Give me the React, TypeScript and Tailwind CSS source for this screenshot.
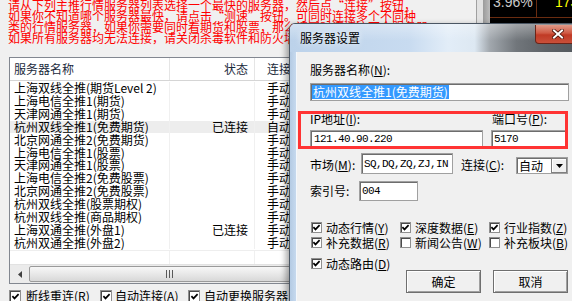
import React from 'react';

const rows = [
  { name: '上海双线全推(期货Level 2)', status: '', mode: '手动' },
  { name: '上海电信全推1(期货)', status: '', mode: '手动' },
  { name: '天津网通全推1(期货)', status: '', mode: '手动' },
  { name: '杭州双线全推1(免费期货)', status: '已连接', mode: '自动', selected: true },
  { name: '北京网通全推2(免费期货)', status: '', mode: '手动' },
  { name: '上海电信全推1(股票)', status: '', mode: '手动' },
  { name: '天津网通全推1(股票)', status: '', mode: '手动' },
  { name: '上海电信全推2(免费股票)', status: '', mode: '手动' },
  { name: '北京网通全推2(免费股票)', status: '', mode: '手动' },
  { name: '杭州双线全推(股票期权)', status: '', mode: '手动' },
  { name: '杭州双线全推(商品期权)', status: '', mode: '手动' },
  { name: '上海双通全推(外盘1)', status: '已连接', mode: '手动' },
  { name: '杭州双通全推(外盘2)', status: '', mode: '手动' },
];

function Box({ checked, big }: { checked?: boolean; big?: boolean }) {
  return (
    <span
      className={`${big ? 'w-[12px] h-[12px]' : 'w-[11px] h-[11px]'} shrink-0 bg-white border border-[#8f8f8f] shadow-[inset_1px_1px_0_#4a4a4a] flex items-center justify-center`}
    >
      {checked && (
        <svg width="9" height="9" viewBox="0 0 9 9">
          <path d="M1.4 4.2 L3.5 6.4 L7.6 2.1" stroke="#000" strokeWidth="1.7" fill="none" />
        </svg>
      )}
    </span>
  );
}

function Key({ k }: { k: string }) {
  return (
    <span>
      (<span className="underline underline-offset-[1px]">{k}</span>)
    </span>
  );
}

const edit = 'bg-white border border-[#a0a0a0] shadow-[inset_1px_1px_0_#6d6d6d] flex items-center';
const mono = "font-['Liberation_Mono',monospace] text-[11px] tracking-[-0.6px]";
const btn =
  'w-[75px] h-[23px] flex items-center justify-center border border-[#6f6f6f] bg-[#f0f0f0] shadow-[inset_1px_1px_0_#ffffff,inset_-1px_-1px_0_#a0a0a0]';

function Dialog() {
  return (
    <div className="absolute left-[289px] top-[23px] w-[300px] h-[290px] flex flex-col rounded-t-[6px] border border-[#4a5663] overflow-hidden shadow-[-3px_2px_6px_rgba(0,0,0,0.35)]">
      {/* title bar */}
      <div className="h-[28px] shrink-0 flex items-start bg-[linear-gradient(to_bottom,rgba(255,255,255,0.35),rgba(255,255,255,0)_60%),linear-gradient(to_right,#bcd2ea_0%,#c8dbf0_40%,#e2edf8_53%,#dde8f2_62%,#a2a8ae_67%,#71767b_76%,#5d6267_86%,#50555a_100%)]">
        <span className="ml-[10px] mt-[8px] text-black [text-shadow:0_0_6px_#ffffff]">服务器设置</span>
        <div className="ml-auto mr-[8px] mt-[1px] w-[45px] h-[19px] rounded-b-[4px] border border-[#6b2418] border-t-0 bg-[linear-gradient(to_bottom,#e09a88,#cf5a44_45%,#c03a25_55%,#c9503a)] flex items-center justify-center">
          <svg width="12" height="10" viewBox="0 0 12 10">
            <path d="M2 1.5 L10 8.5 M10 1.5 L2 8.5" stroke="#4a1208" strokeWidth="3.6" strokeLinecap="square" />
            <path d="M2 1.5 L10 8.5 M10 1.5 L2 8.5" stroke="#ffffff" strokeWidth="2" strokeLinecap="square" />
          </svg>
        </div>
      </div>

      <div className="flex-1 flex">
        <div className="w-[7px] shrink-0 border-r border-[#f4f8fc] bg-[linear-gradient(to_right,#b4cbe4,#c6d9ee)]" />

        {/* client */}
        <div className="relative flex-1 bg-[#f0f0f0] pl-[13px] flex flex-col items-start">
          <div className="mt-[12px] h-[12px]">
            服务器名称<Key k="N" />:
          </div>
          <div className={`mt-[7px] w-[259px] h-[18px] pl-[1px] ${edit}`}>
            <span className="bg-[#3399ff] text-white h-[14px] leading-[14px] px-[1px]">杭州双线全推1(免费期货)</span>
          </div>

          <div className="mt-[12px] h-[12px] flex">
            <span className="w-[182px]">
              IP地址<Key k="I" />:
            </span>
            <span>
              端口号<Key k="P" />:
            </span>
          </div>
          <div className="mt-[5px] flex gap-[8px]">
            <div className={`w-[173px] h-[17px] pl-[3px] ${edit}`}>
              <span className={mono}>121.40.90.220</span>
            </div>
            <div className={`w-[76px] h-[17px] pl-[2px] ${edit}`}>
              <span className={mono}>5170</span>
            </div>
          </div>

          <div className="mt-[6px] h-[21px] flex items-center">
            <span className="w-[51px] pt-[3px]">
              市场<Key k="M" />:
            </span>
            <div className={`w-[92px] h-[21px] pl-[2px] ${edit}`}>
              <span className={mono}>SQ,DQ,ZQ,ZJ,IN</span>
            </div>
            <span className="ml-[8px] w-[55px] pt-[3px]">
              连接<Key k="C" />:
            </span>
            <div className={`mt-[4px] w-[52px] h-[17px] pl-[2px] ${edit}`}>
              <span className="flex-1">自动</span>
              <span className="w-[16px] h-[15px] bg-[#f0f0f0] border border-[#808080] shadow-[inset_1px_1px_0_#ffffff] flex items-center justify-center">
                <svg width="7" height="4" viewBox="0 0 7 4">
                  <path d="M0 0 H7 L3.5 4 Z" fill="#000" />
                </svg>
              </span>
            </div>
          </div>

          <div className="mt-[7px] h-[20px] flex items-center">
            <span className="w-[49px]">索引号:</span>
            <div className={`w-[59px] h-[20px] pl-[2px] ${edit}`}>
              <span className={mono}>004</span>
            </div>
          </div>

          <div className="mt-[21px] ml-[1px] grid grid-cols-[89px_89px_89px] leading-[11px]">
            <div className="h-[11px] flex items-center gap-[4px]">
              <Box checked />
              <span>
                动态行情<Key k="Y" />
              </span>
            </div>
            <div className="h-[11px] flex items-center gap-[4px]">
              <Box checked />
              <span>
                深度数据<Key k="E" />
              </span>
            </div>
            <div className="h-[11px] flex items-center gap-[4px]">
              <Box checked />
              <span>
                行业指数<Key k="Z" />
              </span>
            </div>
          </div>
          <div className="mt-[4px] ml-[1px] grid grid-cols-[89px_89px_89px] leading-[11px]">
            <div className="h-[11px] flex items-center gap-[4px]">
              <Box checked />
              <span>
                补充数据<Key k="R" />
              </span>
            </div>
            <div className="h-[11px] flex items-center gap-[4px]">
              <Box />
              <span>
                新闻公告<Key k="W" />
              </span>
            </div>
            <div className="h-[11px] flex items-center gap-[4px]">
              <Box />
              <span>
                补充板块<Key k="B" />
              </span>
            </div>
          </div>
          <div className="mt-[10px] ml-[1px] h-[11px] flex items-center gap-[4px] leading-[11px]">
            <Box checked />
            <span>
              动态路由<Key k="D" />
            </span>
          </div>

          <div className="mt-[1px] ml-[96px] flex gap-[12px]">
            <div className={btn}>确定</div>
            <div className={btn}>取消</div>
          </div>

          {/* highlight annotation */}
          <div className="absolute left-[1px] top-[59px] w-[270px] h-[38px] border-[3px] border-[#ff3333] pointer-events-none" />
        </div>
      </div>
    </div>
  );
}

export default function App() {
  return (
    <div className="relative w-[572px] h-[301px] overflow-hidden flex bg-[#f0f0f0] text-black text-[12px] leading-[12px] font-['Noto_Sans_CJK_SC','Noto_Sans_CJK_JP',sans-serif]">
      {/* server list window */}
      <div className="w-[476px] shrink-0 pl-[8px] flex flex-col">
        <div className="-mt-[1px] text-[#ff0000] whitespace-nowrap leading-[11px]">
          <p>请从下列主推行情服务器列表选择一个最快的服务器，然后点“连接”按钮，</p>
          <p>如果你不知道哪个服务器最快，请点击“测速”按钮。可同时连接多个不同种</p>
          <p>类的行情服务器，如果你需要同时看期货和股票，那么请同时连接这两个服务器。</p>
          <p>如果所有服务器均无法连接，请关闭杀毒软件和防火墙后再试。</p>
        </div>

        <div className="mt-[14px] ml-[1px] w-[467px] h-[227px] shrink-0 border border-[#828790] bg-white flex flex-col">
          <div className="h-[23px] shrink-0 flex border-b border-[#d5d5d5] text-[#1b2a3c]">
            <div className="w-[160px] border-r border-[#e5e5e5] pl-[4px] flex items-center">服务器名称</div>
            <div className="w-[85px] border-r border-[#e5e5e5] pr-[6px] flex items-center justify-end">状态</div>
            <div className="pl-[12px] flex items-center">连接</div>
          </div>

          <div className="flex-1 flex flex-col pt-[1px]">
            {rows.map((r) => (
              <div
                key={r.name}
                className={`h-[12.85px] shrink-0 flex items-center ${r.selected ? 'bg-[#ededed]' : ''}`}
              >
                <div className="w-[160px] h-full border-r border-[#f0f0f0] pl-[4px] flex items-center">{r.name}</div>
                <div className="w-[85px] h-full border-r border-[#f0f0f0] pr-[6px] flex items-center justify-end">
                  {r.status}
                </div>
                <div className="pl-[12px] flex items-center">{r.mode}</div>
              </div>
            ))}
            <div className="flex-1 flex border-t border-[#eeeeee] mt-[1px]">
              <div className="w-[160px] border-r border-[#f0f0f0]" />
              <div className="w-[85px] border-r border-[#f0f0f0]" />
            </div>
          </div>

          {/* horizontal scrollbar */}
          <div className="h-[19px] shrink-0 bg-[#ebebeb] border-t border-[#e2e2e2] flex items-center">
            <div className="w-[19px] h-full flex items-center justify-center">
              <svg width="4" height="7" viewBox="0 0 4 7">
                <path d="M4 0 V7 L0 3.5 Z" fill="#404040" />
              </svg>
            </div>
            <div className="w-[280px] h-[16px] rounded-[2px] border border-[#9a9a9a] bg-[linear-gradient(to_bottom,#f7f7f7,#e8e8e8_50%,#d8d8d8)] flex items-center justify-center">
              <svg width="7" height="8" viewBox="0 0 7 8">
                <path d="M0.5 0 V8 M3.5 0 V8 M6.5 0 V8" stroke="#5a5a5a" strokeWidth="1" />
              </svg>
            </div>
          </div>
        </div>

        <div className="mt-[6px] ml-[1px] flex items-center">
          <div className="w-[91px] flex items-center gap-[5px]">
            <Box checked big />
            <span>
              断线重连<Key k="R" />
            </span>
          </div>
          <div className="w-[88px] flex items-center gap-[3px]">
            <Box checked big />
            <span>
              自动连接<Key k="A" />
            </span>
          </div>
          <div className="flex items-center gap-[4px]">
            <Box checked big />
            <span>自动更换服务器</span>
          </div>
        </div>
      </div>

      {/* window edge */}
      <div className="w-[14px] shrink-0 border-l border-[#a0a0a0] bg-[linear-gradient(to_right,#e2e2e2_0%,#e2e2e2_45%,#9d9d9d_50%,#bdbdbd_100%)]" />

      {/* quote panel behind */}
      <div className="flex-1 bg-black flex flex-col">
        <div className="h-[18px] flex border-b border-[#6a2c10] overflow-hidden font-['Liberation_Sans',sans-serif] text-[14px] leading-[14px]">
          <div className="w-[47px] border-r border-[#6a2c10] pl-[3px] overflow-hidden">
            <span className="block -mt-[5px] text-[#c8c8c8]">3.96%</span>
          </div>
          <div className="pl-[18px] overflow-hidden">
            <span className="block -mt-[5px] text-[#ffff00]">173</span>
          </div>
        </div>
      </div>

      <Dialog />
    </div>
  );
}
